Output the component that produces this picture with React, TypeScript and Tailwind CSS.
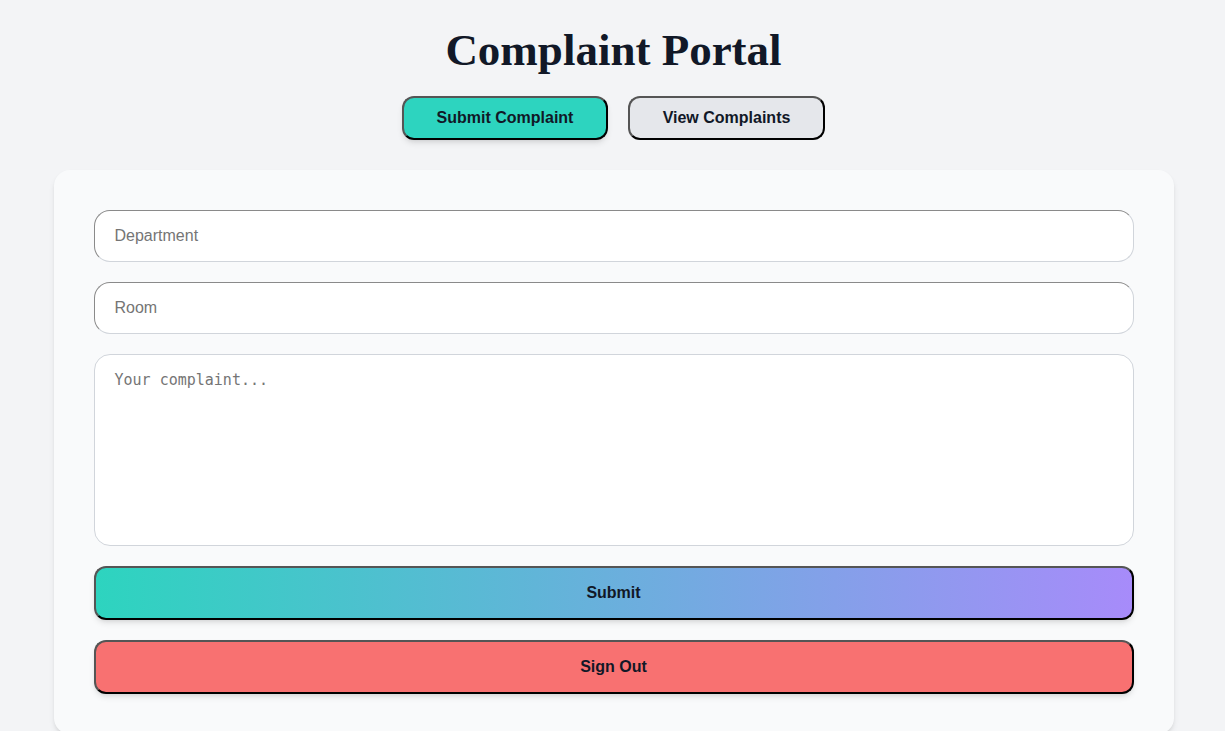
import React from 'react';

// Complaint portal: submit form
const inputClass =
  "w-full h-[52px] px-5 rounded-2xl bg-white border border-[#d1d5db] border-t-[#8a8a8a] border-l-[#8a8a8a] text-base text-gray-900 placeholder:text-[#757575] outline-none";

const App: React.FC = () => {
  return (
    <div className="min-h-screen bg-[#f3f4f6] flex flex-col items-center pt-[27px] pb-10 pl-[2px] font-['Liberation_Sans',Arial,sans-serif]">
      <h1 className="text-[45px] leading-[47px] font-bold text-[#111827] font-['Liberation_Serif','Times_New_Roman',serif]">
        Complaint Portal
      </h1>

      {/* Tabs */}
      <div className="flex gap-5 mt-[22px]">
        <button className="h-11 w-[206px] rounded-xl bg-[#2dd4bf] text-base font-bold text-[#111827] border-2 border-[#555] border-b-black border-r-black shadow-md">
          Submit Complaint
        </button>
        <button className="h-11 w-[197px] rounded-xl bg-[#e5e7eb] text-base font-bold text-[#111827] border-2 border-[#555] border-b-black border-r-black">
          View Complaints
        </button>
      </div>

      {/* Form card */}
      <div className="w-[1120px] mt-[30px] bg-[#f9fafb] rounded-2xl shadow-md p-10 flex flex-col gap-5">
        <input className={inputClass} placeholder="Department" />
        <input className={inputClass} placeholder="Room" />
        <textarea
          className="w-full h-[192px] px-5 py-4 rounded-2xl bg-white border border-[#d1d5db] resize-none text-[15px] leading-[18px] font-['DejaVu_Sans_Mono',monospace] placeholder:text-[#757575] outline-none"
          placeholder="Your complaint..."
        />
        <button className="w-full h-[54px] rounded-xl bg-[linear-gradient(to_right,#2dd4bf,#a78bfa)] text-base font-bold text-[#111827] border-2 border-[#555] border-b-black border-r-black shadow-md">
          Submit
        </button>
        <button className="w-full h-[54px] rounded-xl bg-[#f87171] text-base font-bold text-[#111827] border-2 border-[#555] border-b-black border-r-black shadow-md">
          Sign Out
        </button>
      </div>
    </div>
  );
};

export default App;
